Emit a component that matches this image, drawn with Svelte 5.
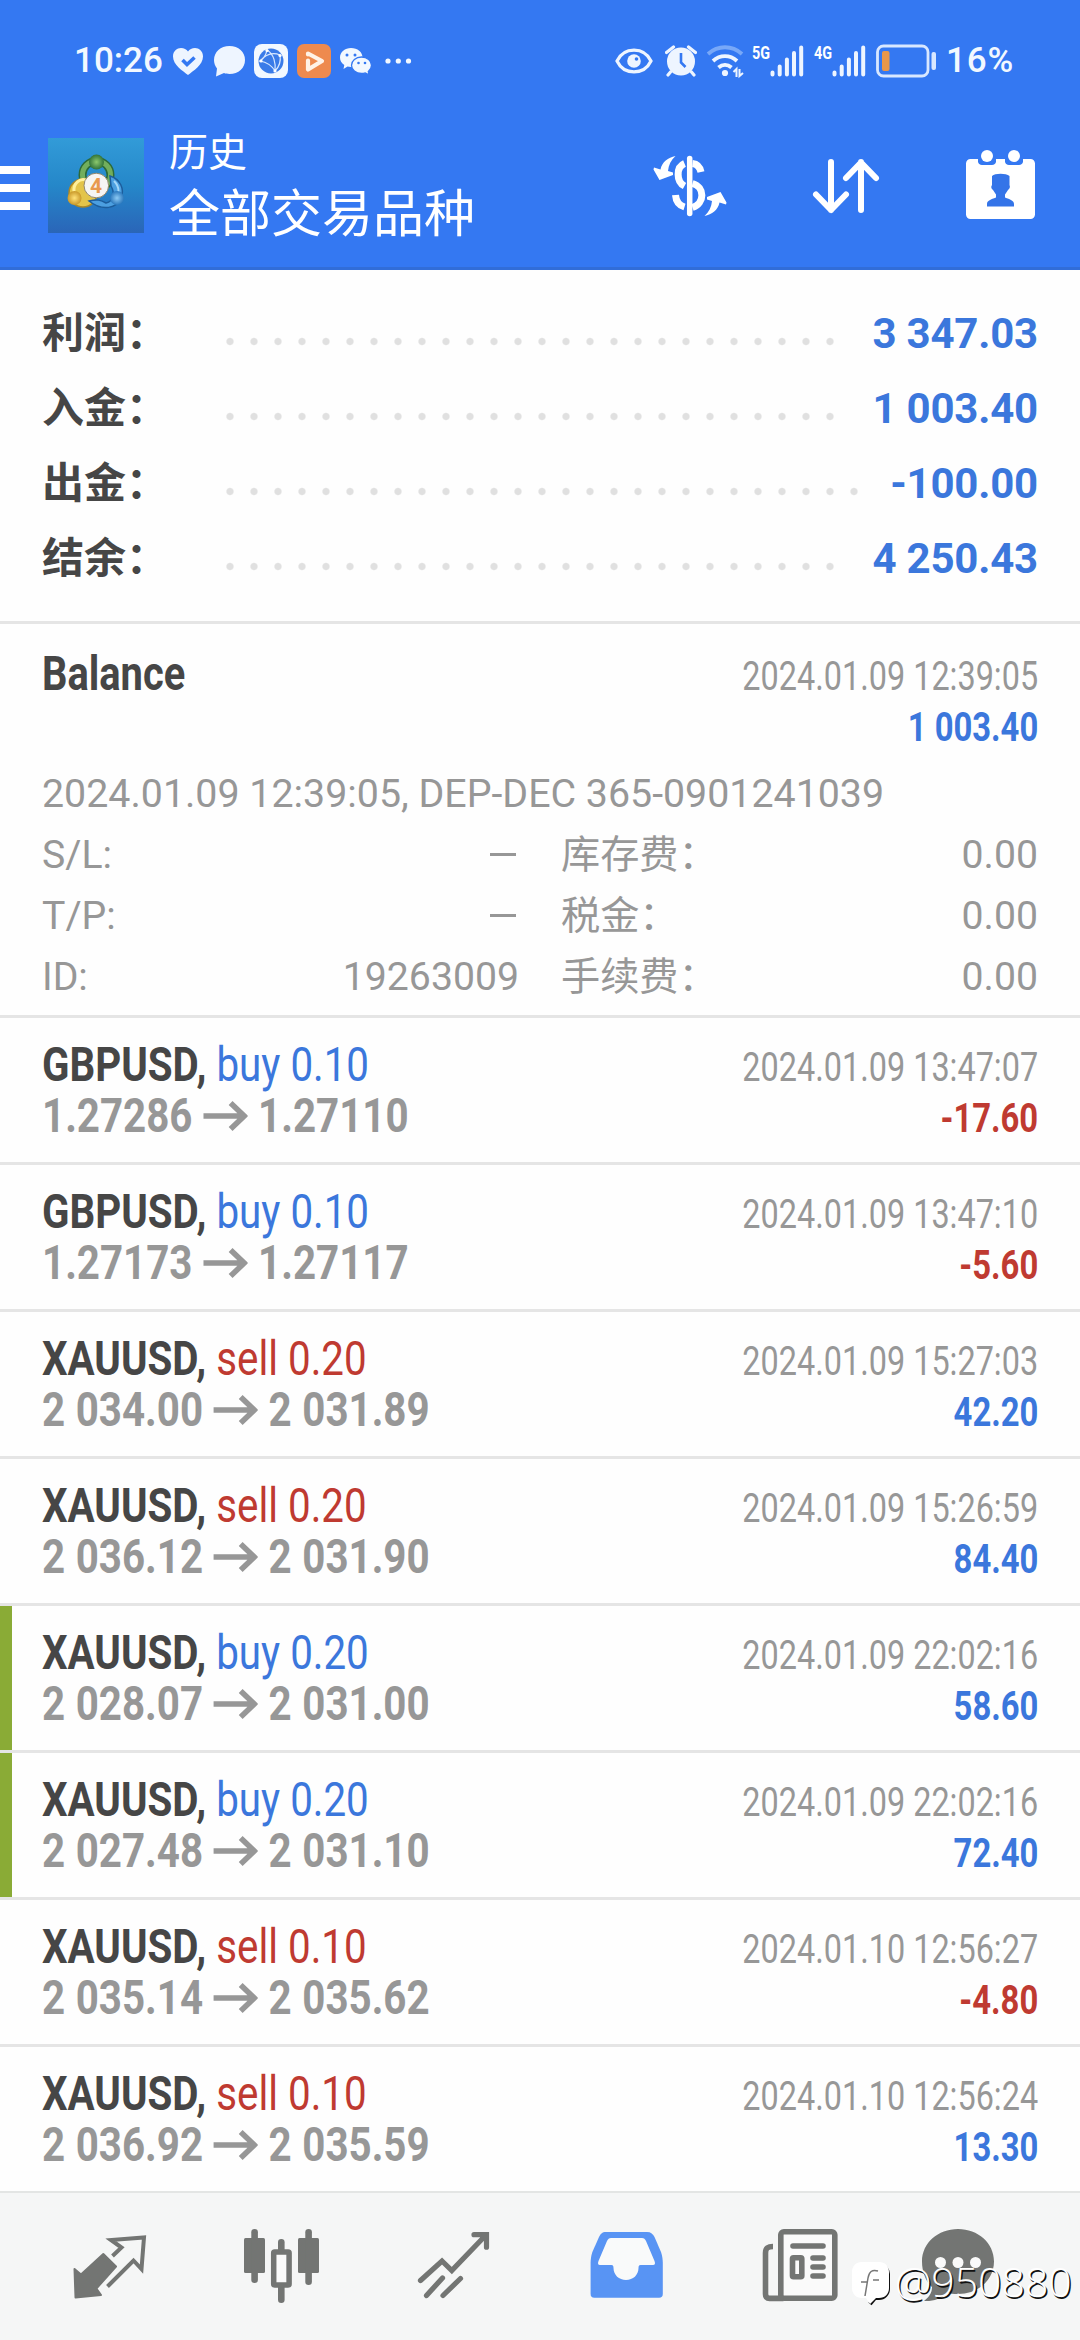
<script lang="ts">
	type Deal = {
		symbol: string;
		side: 'buy' | 'sell';
		volume: string;
		open: string;
		close: string;
		time: string;
		profit: string;
		marked?: boolean;
	};

	// Account totals; dots is the number of leader dots before the value
	const summary = [
		{ label: '利润：', value: '3 347.03', dots: 26 },
		{ label: '入金：', value: '1 003.40', dots: 26 },
		{ label: '出金：', value: '-100.00', dots: 27 },
		{ label: '结余：', value: '4 250.43', dots: 26 }
	];

	const details = [
		{ label: 'S/L:', value: '', label2: '库存费：', value2: '0.00' },
		{ label: 'T/P:', value: '', label2: '税金：', value2: '0.00' },
		{ label: 'ID:', value: '19263009', label2: '手续费：', value2: '0.00' }
	];

	const deals: Deal[] = [
		{ symbol: 'GBPUSD', side: 'buy', volume: '0.10', open: '1.27286', close: '1.27110', time: '2024.01.09 13:47:07', profit: '-17.60' },
		{ symbol: 'GBPUSD', side: 'buy', volume: '0.10', open: '1.27173', close: '1.27117', time: '2024.01.09 13:47:10', profit: '-5.60' },
		{ symbol: 'XAUUSD', side: 'sell', volume: '0.20', open: '2 034.00', close: '2 031.89', time: '2024.01.09 15:27:03', profit: '42.20' },
		{ symbol: 'XAUUSD', side: 'sell', volume: '0.20', open: '2 036.12', close: '2 031.90', time: '2024.01.09 15:26:59', profit: '84.40' },
		{ symbol: 'XAUUSD', side: 'buy', volume: '0.20', open: '2 028.07', close: '2 031.00', time: '2024.01.09 22:02:16', profit: '58.60', marked: true },
		{ symbol: 'XAUUSD', side: 'buy', volume: '0.20', open: '2 027.48', close: '2 031.10', time: '2024.01.09 22:02:16', profit: '72.40', marked: true },
		{ symbol: 'XAUUSD', side: 'sell', volume: '0.10', open: '2 035.14', close: '2 035.62', time: '2024.01.10 12:56:27', profit: '-4.80' },
		{ symbol: 'XAUUSD', side: 'sell', volume: '0.10', open: '2 036.92', close: '2 035.59', time: '2024.01.10 12:56:24', profit: '13.30' }
	];

	const networks = ['5G', '4G'];
</script>

<div class="screen">
	<header>
		<div class="status">
			<span class="clock">10:26</span>
			<svg class="s-heart" width="30" height="27" viewBox="0 0 30 27">
				<path d="M15 27C10 23 0 17 0 8.500C0 3 4 0 8 0c3 0 5.500 1.500 7 3.500C16.500 1.500 19 0 22 0c4 0 8 3 8 8.500C30 17 20 23 15 27z" fill="#eef5ff" />
				<path d="M9.500 12l4.500 4.500 7.500-7" fill="none" stroke="#3478f2" stroke-width="3.600" />
			</svg>
			<svg class="s-bubble" width="31" height="31" viewBox="0 0 31 31">
				<path d="M15.500 0C24.500 0 31 6 31 14s-6.500 14-15.500 14c-2 0-4-.3-5.500-.9L2 30.500l1-8C1 20 0 17 0 14 0 6 6.500 0 15.500 0z" fill="#eef5ff" />
			</svg>
			<svg class="s-app" width="34" height="34" viewBox="0 0 34 34">
				<rect width="34" height="34" rx="8" fill="#f2f8ff" />
				<circle cx="17" cy="17" r="12.500" fill="#3a7be8" />
				<g fill="none" stroke="#d8e8ff" stroke-width="1.200">
					<path d="M13 6C12 12 8 16 6 17c6 1 12 5 15 10M6 17C12 10 19 8 26 11M13 6c7 4 9 14 8 21M21 27c4-4 6-10 5-16" />
				</g>
				<g fill="#fff">
					<circle cx="13" cy="6.500" r="1.600" /><circle cx="7" cy="17" r="1.600" />
					<circle cx="21" cy="27" r="1.600" /><circle cx="26" cy="11.500" r="1.600" />
				</g>
			</svg>
			<svg class="s-app" width="34" height="34" viewBox="0 0 34 34">
				<rect width="34" height="34" rx="7" fill="#ee8a4e" />
				<path d="M11 10.500v-1L25 17 11 25.500v-9" fill="none" stroke="#fff2e6" stroke-width="4.200" stroke-linejoin="round" stroke-linecap="round" />
			</svg>
			<svg class="s-wechat" width="32" height="27" viewBox="0 0 32 27">
				<path d="M11 0c6.500 0 11.500 4 11.500 9.500S17.500 19 11 19c-1.300 0-2.500-.2-3.500-.5L3.500 21l.8-4C1.500 15 0 12.500 0 9.500 0 4 5 0 11 0z" fill="#f2f8ff" />
				<path d="M21.500 9c5.800 0 10 3.600 10 8.300 0 2.500-1.300 4.700-3.200 6.200l.7 3.300-3.700-1.900c-1.200.4-2.500.6-3.800.6-5.700 0-10-3.600-10-8.200S15.800 9 21.500 9z" fill="#f2f8ff" stroke="#3478f2" stroke-width="1.300" />
				<g fill="#3478f2">
					<circle cx="7" cy="7" r="1.500" /><circle cx="15" cy="7" r="1.500" />
					<circle cx="18.500" cy="15" r="1.300" /><circle cx="25" cy="15" r="1.300" />
				</g>
			</svg>
			<svg class="s-more" width="27" height="6" viewBox="0 0 27 6" fill="#f2f8ff">
				<circle cx="3" cy="3" r="2.600" /><circle cx="13.300" cy="3" r="2.600" /><circle cx="23.500" cy="3" r="2.600" />
			</svg>

			<svg class="s-eye" width="38" height="26" viewBox="0 0 38 26">
				<path d="M2 13C9 -1.500 29 -1.500 36 13 29 27.500 9 27.500 2 13z" fill="none" stroke="#eef5ff" stroke-width="3.200" />
				<circle cx="19" cy="13" r="6.800" fill="#eef5ff" />
				<circle cx="21.500" cy="11" r="1.800" fill="#3478f2" />
			</svg>
			<svg class="s-alarm" width="32" height="32" viewBox="0 0 32 32">
				<circle cx="16" cy="16.500" r="14" fill="#eef5ff" />
				<path d="M1.500 7.500L8.500 2M30.500 7.500L23.500 2M5.500 27L3 30M26.500 27l2.500 3" stroke="#eef5ff" stroke-width="3.200" stroke-linecap="round" />
				<path d="M16 8v9.500l4.500 4.500" fill="none" stroke="#3478f2" stroke-width="2.600" />
			</svg>
			<svg class="s-wifi" width="40" height="36" viewBox="0 0 40 36" fill="none" stroke-width="3.800">
				<path d="M3 11C13 2 27 2 37 11" stroke="#78a8f8" />
				<path d="M8 18c7-6.500 17-6.500 24 0M13.500 24.500c4-3.500 9-3.500 13 0" stroke="#eef5ff" />
				<circle cx="20" cy="30" r="3.100" fill="#eef5ff" stroke="none" />
				<path d="M28.500 29l3-3v8M34.500 26v7l3.500-3" stroke="#eef5ff" stroke-width="2" />
			</svg>
			{#each networks as net}
				<div class="signal">
					<span>{net}</span>
					<svg width="34" height="32" viewBox="0 0 34 32" stroke="#eef5ff" stroke-width="4" stroke-linecap="round">
						<path d="M2.500 27.500v2M9.700 21.500v8M16.900 14.500v15M24 8v21.500M31.200 2.500v27" />
					</svg>
				</div>
			{/each}
			<svg class="s-battery" width="61" height="34" viewBox="0 0 61 34">
				<rect x="1.500" y="2" width="50.500" height="30" rx="6" fill="none" stroke="#d8e7ff" stroke-width="2.800" />
				<rect x="6" y="7" width="7.500" height="20" rx="2" fill="#e8974a" />
				<rect x="55.500" y="8" width="4.500" height="18" rx="2" fill="#d8e7ff" />
			</svg>
			<span class="percent">16%</span>
		</div>

		<div class="appbar">
			<svg class="menu" width="30" height="44" viewBox="0 0 30 44" fill="#fff">
				<path d="M0 0h30v8H0zM0 18h30v8H0zM0 36h30v8H0z" />
			</svg>
			<svg class="logo" width="96" height="95" viewBox="0 0 96 95">
				<defs>
					<linearGradient id="sky" x1="0" y1="0" x2="0" y2="1">
						<stop offset="0" stop-color="#329bd8" />
						<stop offset=".5" stop-color="#2587c9" />
						<stop offset="1" stop-color="#2a65b8" />
					</linearGradient>
					<radialGradient id="green"><stop offset="0" stop-color="#8cc96e" /><stop offset="1" stop-color="#31733a" /></radialGradient>
					<radialGradient id="gold"><stop offset="0" stop-color="#ffe37a" /><stop offset="1" stop-color="#c99829" /></radialGradient>
					<radialGradient id="blue"><stop offset="0" stop-color="#8dcaf4" /><stop offset="1" stop-color="#2b78bd" /></radialGradient>
				</defs>
				<rect width="96" height="95" fill="url(#sky)" />
				<circle cx="48.500" cy="37" r="14" fill="none" stroke="#2c6a38" stroke-width="8" />
				<circle cx="48.500" cy="37" r="14" fill="none" stroke="#72ae5c" stroke-width="5" />
				<circle cx="35" cy="55" r="14" fill="#e3c44a" stroke="#a98728" stroke-width="1.500" />
				<path d="M26 54c-1-9 6-14 12-12" fill="none" stroke="#fff09a" stroke-width="3" />
				<path d="M62 38c10 3 15 13 11 22-4 10-18 14-32 3 8-2 12-1 17 2 8-2 9-10 5-17z" fill="#4c9fe0" stroke="#1c5d9c" stroke-width="1.500" />
				<path d="M66 43c6 6 6 14 0 20" fill="none" stroke="#a4d7f8" stroke-width="2" />
				<circle cx="48.500" cy="24" r="7.500" fill="url(#green)" />
				<circle cx="26.500" cy="60" r="7" fill="url(#gold)" />
				<circle cx="69" cy="60" r="7" fill="url(#blue)" />
				<circle cx="48.300" cy="47.500" r="12.300" fill="#f6f5f3" stroke="#93876c" stroke-width="1" />
				<text x="48" y="55" class="four">4</text>
			</svg>
			<div class="titles">
				<div class="section-name">历史</div>
				<div class="filter">全部交易品种</div>
			</div>
			<svg class="a-money" width="80" height="66" viewBox="0 0 80 66" fill="none" stroke="#fff" stroke-width="7">
				<path d="M39.700 5.500v55" stroke-width="5.500" stroke-linecap="round" />
				<path d="M34.500 10.500C26 14 26 28.500 34.500 33M42.500 10.500c5 .5 7.500 4 8.500 8.500M42.500 30.500c12.500 3.500 12.500 20 0 24M25.500 42c.5 6.500 4 10.500 9 12" />
				<g fill="#fff" stroke="none">
					<path d="M25.500 3C18 4.500 12 9 10.500 16.500L4 14.500l-.5 2L9.500 27 23 22v-2.500L18 18c.5-6 3-11 7.500-15z" />
					<path d="M25.500 3C18 4.500 12 9 10.500 16.500L4 14.500l-.5 2L9.500 27 23 22v-2.500L18 18c.5-6 3-11 7.500-15z" transform="rotate(180 40 33)" />
				</g>
			</svg>
			<svg class="a-sort" width="72" height="60" viewBox="0 0 72 60" fill="none" stroke="#fff" stroke-width="6" stroke-linecap="round" stroke-linejoin="round">
				<path d="M21 6v48M6 38.500L21 54l15-15.500M51 54V6M36 22L51 6.500 66 22" />
			</svg>
			<svg class="a-calendar" width="75" height="75" viewBox="0 0 75 75">
				<path d="M7.500 12H15v2.500c0 2 2 3.500 4 3.500h10c2 0 4-1.500 4-3.500V12h9v2.500c0 2 2 3.500 4 3.500h10c2 0 4-1.500 4-3.500V12h7.500c2.500 0 4.500 2 4.500 4.500v51c0 2.500-2 4.500-4.500 4.500h-60C5 72 3 70 3 67.500v-51C3 14 5 12 7.500 12z" fill="#fff" />
				<circle cx="24" cy="9" r="6" fill="#fff" />
				<circle cx="51" cy="9" r="6" fill="#fff" />
				<path d="M29 29c3-3 14-3 17.500 0v9c1 2 0 4-1.500 5l-3 4.500v3c5 2 9 3 9 6.500v2.500H24V57c0-3.500 4-4.500 9-6.500v-3L30 43c-1.500-1-2.500-3-1-5z" fill="#3474e8" />
			</svg>
		</div>
	</header>

	<section class="summary">
		{#each summary as item}
			<div class="total">
				<span class="label">{item.label}</span>
				<span class="leader" style="width: {item.dots * 24}px"></span>
				<span class="value">{item.value}</span>
			</div>
		{/each}
	</section>

	<section class="balance">
		<div class="line">
			<span class="name title">Balance</span>
			<span class="time">2024.01.09 12:39:05</span>
		</div>
		<div class="line amount">
			<span class="profit">1 003.40</span>
		</div>
		<div class="comment">2024.01.09 12:39:05, DEP-DEC 365-0901241039</div>
		{#each details as row}
			<div class="detail">
				<span>{row.label}</span>
				<span class="num">
					{#if row.value}
						{row.value}
					{:else}
						<i class="dash"></i>
					{/if}
				</span>
				<span class="second">{row.label2}</span>
				<span class="num">{row.value2}</span>
			</div>
		{/each}
	</section>

	{#each deals as deal}
		<section class="deal" class:marked={deal.marked}>
			<div class="line">
				<span class="name"><b>{deal.symbol},</b> <span class={deal.side}>{deal.side} {deal.volume}</span></span>
				<span class="time">{deal.time}</span>
			</div>
			<div class="line">
				<span class="prices">{deal.open}
					<svg width="53" height="30" viewBox="0 0 44 30" preserveAspectRatio="none" fill="none" stroke="#979797" stroke-width="5.500">
						<path d="M0 15h41M27 2l13.500 13L27 28" />
					</svg>
					{deal.close}</span>
				<span class="profit" class:loss={deal.profit.startsWith('-')}>{deal.profit}</span>
			</div>
		</section>
	{/each}

	<nav>
		<svg width="76" height="78" viewBox="0 0 76 78">
			<path d="M31.300 28L44 40.500 24.400 62.500l4.600 6.500L3.500 71.500 2.500 43l6.500 5.500z" fill="#737573" stroke="#737573" stroke-width="2" stroke-linejoin="round" />
			<path d="M40.500 30l9-8.500L39 14l33-2.500L69.500 43 61.500 34.500l-26 26" fill="none" stroke="#737573" stroke-width="4" />
		</svg>
		<svg width="77" height="78" viewBox="0 0 77 78" fill="#737573">
			<rect x="1" y="12" width="21" height="35" rx="1.500" /><rect x="8.300" y="3" width="6.600" height="54" rx="3.300" />
			<rect x="55" y="12" width="21" height="35" rx="1.500" /><rect x="62.300" y="3" width="6.600" height="56" rx="3.300" />
			<rect x="35" y="13" width="6.600" height="14" rx="3.300" /><rect x="35" y="58" width="6.600" height="19" rx="3.300" />
			<rect x="30.700" y="26" width="15.400" height="33" rx="1" fill="#fafafa" stroke="#737573" stroke-width="5.500" />
		</svg>
		<svg width="76" height="78" viewBox="0 0 76 78" fill="none" stroke="#737573" stroke-width="5.200" stroke-linecap="round">
			<path d="M4.500 54.500L26 35l9.800 9.500L69 10M58 8.700h12.500v12.500M10.500 69.500L26.500 52M27 69.500L44.500 52.500" />
		</svg>
		<svg width="76" height="78" viewBox="0 0 76 78">
			<path d="M17 6h41c4 0 6 2 7.500 5L72 26c1.300 3.500 1.800 8 1.800 11v31c0 2.500-1.300 3.700-3.700 3.700H5.300c-2.400 0-3.700-1.200-3.700-3.700V37c0-3 .5-7.500 1.800-11L10 11c1.500-3 3-5 7-5z" fill="#5894f4" />
			<path d="M22 12h31c2 0 3 1 4 3l8.500 20c1 2.500.5 4-1.500 4H51.500c-1.500 0-2 1-2 3 0 7-5.500 12-12.500 12s-12.500-5-12.500-12c0-2-.5-3-2-3H11c-2 0-2.500-1.500-1.500-4L18 15c1-2 2-3 4-3z" fill="#f9fafa" />
		</svg>
		<svg width="77" height="78" viewBox="0 0 77 78" fill="none" stroke="#737573" stroke-width="5.600">
			<rect x="18.800" y="5.800" width="54" height="66.400" rx="3" fill="#fafafa" />
			<path d="M11 20.500C6 20.500 3.500 22 3.500 27v41c0 3 1.500 4.400 4 4.400h14" />
			<path d="M31 20h30M51 32h10M51 41h10M51 50h10" stroke-linecap="round" />
			<rect x="30.500" y="31.700" width="9.300" height="19" rx="1" />
		</svg>
		<svg width="76" height="78" viewBox="0 0 76 78">
			<path d="M38 3C58 3 74 17 74 35.500S58 68 38 68c-5 0-8-.5-11-1-6 6-14 8.500-23 8 5-4 8-8 8-14C6 56 2 46 2 35.500 2 17 18 3 38 3z" fill="#737573" />
			<g fill="#fafafa"><circle cx="20.500" cy="36.500" r="5.500" /><circle cx="38" cy="36.500" r="5.500" /><circle cx="55.500" cy="36.500" r="5.500" /></g>
		</svg>
	</nav>

	<div class="watermark">
		<svg width="40" height="46" viewBox="0 0 40 46">
			<path d="M28 3c5 1 8 5 8 9v15c0 5-4 9-9 9h-4l-5 6" fill="none" stroke="#111" stroke-width="4" />
			<path d="M10 0h17c6 0 10 4 10 10v16c0 6-4 10-10 10h-3l-6 6-4-6h-4C4 36 0 32 0 26V10C0 4 4 0 10 0z" fill="#fff" />
			<path d="M26 9c-6-2-9 1-10 7l-3 18M9 20h7M21 18h6" fill="none" stroke="#777" stroke-width="1.500" />
		</svg>
		<span>@950880</span>
	</div>
</div>

<style>
	:global(body) {
		background: #fefefe;
	}
	.screen {
		position: relative;
		width: 1080px;
		height: 2340px;
		overflow: hidden;
		background: #fefefe;
		font-family: Roboto, 'Noto Sans CJK SC', sans-serif;
		color: #979797;
	}
	svg {
		display: block;
		flex: none;
	}

	header {
		box-sizing: border-box;
		height: 270px;
		background: #3478f2;
		border-bottom: 3px solid #316dd8;
		color: #fff;
	}
	.status {
		display: flex;
		align-items: center;
		height: 122px;
		padding-left: 74px;
	}
	.clock,
	.percent {
		font-size: 35px;
		font-weight: 500;
		line-height: 36px;
		color: #f2f8ff;
	}
	.clock {
		width: 99px;
	}
	.s-bubble {
		margin-left: 11px;
	}
	.s-app {
		margin-left: 9px;
	}
	.s-wechat {
		margin-left: 9px;
	}
	.s-more {
		margin-left: 13px;
	}
	.s-eye {
		margin-left: auto;
	}
	.s-alarm {
		margin-left: 12px;
	}
	.s-wifi {
		margin-left: 8px;
	}
	.signal {
		display: flex;
		width: 61px;
		margin-left: 7px;
	}
	.signal + .signal {
		margin-left: 1px;
	}
	.signal span {
		width: 18px;
		font-size: 18px;
		font-weight: 700;
		line-height: 15px;
		transform: scaleX(0.8);
		transform-origin: left;
	}
	.s-battery {
		margin-left: 1px;
	}
	.percent {
		width: 134px;
		margin-left: 9px;
		letter-spacing: 0.8px;
	}

	.appbar {
		display: flex;
		align-items: flex-start;
		padding-top: 12px;
	}
	.menu {
		margin-top: 32px;
	}
	.logo {
		margin: 4px 0 0 18px;
	}
	.four {
		font-size: 21px;
		font-weight: 700;
		fill: #e8994e;
		text-anchor: middle;
	}
	.titles {
		flex: 1;
		padding-left: 25px;
	}
	.section-name {
		font-size: 39px;
		line-height: 42px;
		margin-top: -2px;
	}
	.filter {
		font-size: 51px;
		line-height: 60px;
		margin-top: 11px;
	}
	.a-money {
		margin: 19px 80px 0 0;
	}
	.a-sort {
		margin: 22px 81px 0 0;
	}
	.a-calendar {
		margin: 13px 42px 0 0;
	}

	.summary {
		padding: 26px 42px 25px;
		border-bottom: 3px solid #e5e5e5;
	}
	.total {
		display: flex;
		height: 75px;
		font-size: 42px;
		font-weight: 700;
		line-height: 75px;
	}
	.label {
		width: 176px;
		color: #464646;
	}
	.leader {
		height: 91px;
		background: radial-gradient(circle, #e0e0e0 3px, transparent 4.2px) 0 0 / 24px 91px;
	}
	.value {
		margin-left: auto;
		letter-spacing: -0.2px;
		color: #3b77dc;
	}

	.line {
		display: flex;
		align-items: baseline;
		justify-content: space-between;
		height: 51px;
		line-height: 51px;
		white-space: nowrap;
	}
	/* Names, prices, times and profits are squeezed to a condensed width */
	.name,
	.prices {
		font-size: 48px;
		transform: scaleX(0.84);
		transform-origin: left;
	}
	.name {
		color: #464646;
	}
	.title {
		font-weight: 700;
		transform: scaleX(0.83);
	}
	.time {
		font-size: 40px;
		transform: scaleX(0.81);
		transform-origin: right;
	}
	.prices {
		font-weight: 700;
		word-spacing: 0.6px;
	}
	.prices svg {
		display: inline-block;
		vertical-align: 1px;
	}
	.profit {
		margin-left: auto;
		font-size: 40px;
		font-weight: 700;
		color: #3b77dc;
		transform: scaleX(0.82);
		transform-origin: right;
	}
	.buy {
		color: #3b77dc;
	}
	.sell,
	.profit.loss {
		color: #bf3a31;
	}

	.balance {
		padding: 24px 42px 8px;
		border-bottom: 3px solid #e5e5e5;
	}
	.amount {
		box-sizing: border-box;
		padding-top: 3px;
	}
	.comment {
		margin-top: 14px;
		font-size: 39.35px;
		line-height: 61px;
		white-space: nowrap;
	}
	.detail {
		display: grid;
		grid-template-columns: 120px 357px 200px 1fr;
		height: 61px;
		font-size: 39.2px;
		line-height: 61px;
	}
	.detail:last-child {
		height: 60px;
		line-height: 60px;
	}
	.num {
		text-align: right;
	}
	.second {
		padding-left: 42px;
	}
	.dash {
		display: inline-block;
		width: 26px;
		height: 3px;
		margin-right: 3px;
		background: #979797;
		vertical-align: 12px;
	}

	.deal {
		box-sizing: border-box;
		height: 147px;
		padding: 21px 42px;
		border-bottom: 3px solid #e5e5e5;
	}
	.marked {
		background: linear-gradient(#8aab36, #8aab36) 0 0 / 12px 144px no-repeat;
	}

	nav {
		box-sizing: border-box;
		display: grid;
		grid-template-columns: 171px 173px 173px 173px 158px 76px;
		height: 149px;
		margin-top: -3px;
		padding: 33px 0 0 72px;
		border-top: 2px solid #e3e5e4;
		background: #f5f6f6;
	}

	.watermark {
		position: absolute;
		left: 852px;
		top: 2262px;
		display: flex;
		color: #fff;
	}
	.watermark span {
		margin-left: 3px;
		font-family: 'Open Sans', sans-serif;
		font-size: 41px;
		font-weight: 300;
		line-height: 38px;
		text-shadow: 1.5px 1.5px 0 #111;
	}
</style>
